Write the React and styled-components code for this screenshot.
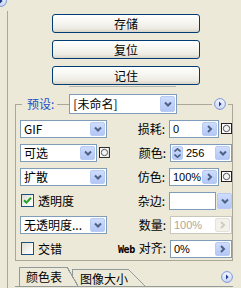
import React from 'react';
import styled, { createGlobalStyle } from 'styled-components';

const Global = createGlobalStyle`
  html, body { margin: 0; padding: 0; background: #ECE9D8; }
  body { font-family: "Noto Sans CJK SC", "Liberation Sans", sans-serif; font-size: 12px; color: #000; }
`;

const LINE = '#ACA899';
const FONT = '"Noto Sans CJK SC", "Liberation Sans", sans-serif';

const Page = styled.div`
  position: relative;
  width: 241px;
  height: 288px;
  overflow: hidden;
  background: #ECE9D8;
  display: flex;
  flex-direction: column;
`;

const CutIcon = styled.div`
  position: absolute;
  top: -7px;
  left: -5px;
  width: 12px;
  height: 12px;
`;

const Panel = styled.div`
  margin: 11px 0 0 7px;
  flex: 1;
  border-left: 1px solid ${LINE};
  display: flex;
  flex-direction: column;
`;

const ButtonStack = styled.div`
  display: flex;
  flex-direction: column;
  gap: 7px;
  margin: 3px 0 0 44px;
`;

const XPButton = styled.button`
  width: 148px;
  height: 19px;
  box-sizing: border-box;
  border: 1px solid #003C74;
  border-radius: 3px;
  background: linear-gradient(#FFFFFF 0%, #F6F5F0 45%, #ECEAE1 80%, #D8D3C7 100%);
  font: 12px ${FONT};
  color: #000;
  padding: 0;
  line-height: 16px;
`;

const Divider = styled.div`
  margin: 1px 0 0 61px;
  width: 107px;
  height: 1px;
  background: #B7B6AC;
`;

const Group = styled.div`
  margin: 7px 0 0 7px;
  width: 218px;
  display: flex;
  flex-direction: column;
`;

const GroupHeader = styled.div`
  display: flex;
  align-items: center;
  height: 20px;
`;

const Corner = styled.div`
  align-self: flex-end;
  width: ${p => p.$w}px;
  height: 9px;
  border-top: 1px solid ${LINE};
  ${p => (p.$side === 'left' ? `border-left: 1px solid ${LINE};` : `border-right: 1px solid ${LINE};`)}
`;

const Segment = styled.div`
  height: 1px;
  margin-top: 1px;
  background: ${LINE};
  ${p => (p.$grow ? 'flex: 1;' : `width: ${p.$w}px;`)}
`;

const Legend = styled.span`
  color: #1C4FC8;
  padding: 0 3px 0 5px;
  line-height: 20px;
  white-space: nowrap;
`;

const GroupBody = styled.div`
  border-left: 1px solid ${LINE};
  border-right: 1px solid ${LINE};
  border-bottom: 1px solid ${LINE};
  padding: 5px 0 2px 4px;
  display: flex;
  flex-direction: column;
  gap: 5px;
`;

const Row = styled.div`
  display: flex;
  align-items: center;
  height: 19px;
`;

const LeftCell = styled.div`
  width: 90px;
  display: flex;
  align-items: center;
  gap: 2px;
  white-space: nowrap;
`;

const FieldLabel = styled.span`
  width: 56px;
  margin-right: 4px;
  text-align: right;
  white-space: nowrap;
  line-height: 18px;
`;

const WebTag = styled.span`
  font-family: "DejaVu Sans Mono", monospace;
  font-weight: bold;
  font-size: 10px;
  margin-right: 4px;
  letter-spacing: -0.5px;
`;

const RightCell = styled.div`
  display: flex;
  align-items: center;
  gap: 2px;
`;

const Field = styled.div`
  box-sizing: border-box;
  width: ${p => p.$w}px;
  height: ${p => p.$h || 18}px;
  display: flex;
  align-items: center;
  border: 1px solid ${p => (p.$disabled ? '#C9C7BA' : '#7F9DB9')};
  background: #fff;
  padding: 0 1px;
  color: ${p => (p.$disabled ? '#ACA899' : '#000')};
`;

const FieldText = styled.span`
  flex: 1;
  min-width: 0;
  padding-left: ${p => p.$pad ?? 2}px;
  line-height: 16px;
  white-space: nowrap;
  font-family: ${p => (p.$latin ? '"Liberation Sans", sans-serif' : FONT)};
  font-size: ${p => (p.$latin ? '11px' : '12px')};
`;

const BlueBtn = styled.span`
  box-sizing: border-box;
  flex: none;
  width: ${p => p.$w || 15}px;
  height: ${p => p.$h || 14}px;
  display: flex;
  flex-direction: column;
  align-items: center;
  justify-content: center;
  gap: 2px;
  border: 1px solid ${p => (p.$disabled ? '#E4E2D8' : '#B8CBF4')};
  border-radius: 2px;
  background: ${p => (p.$disabled ? '#F2F1EA' : 'linear-gradient(#CEDCFD, #B3C7F5)')};
`;

const ColorField = styled.div`
  display: flex;
  align-items: center;
  gap: 1px;
`;

const Chevron = ({ dir = 'down', color = '#4D6185' }) => {
  const paths = {
    down: 'M1 1.5 L4 4.5 L7 1.5',
    up: 'M1 4.5 L4 1.5 L7 4.5',
    right: 'M2 1 L5 4 L2 7',
  };
  const size = dir === 'right' ? { w: 7, h: 8 } : { w: 8, h: 6 };
  return (
    <svg width={size.w} height={size.h} viewBox={`0 0 ${size.w} ${size.h}`}>
      <path d={paths[dir]} fill="none" stroke={color} strokeWidth="2" />
    </svg>
  );
};

const SmallChev = ({ dir }) => (
  <svg width="7" height="4" viewBox="0 0 7 4">
    <path d={dir === 'up' ? 'M0.5 3.5 L3.5 0.8 L6.5 3.5' : 'M0.5 0.5 L3.5 3.2 L6.5 0.5'} fill="none" stroke="#4D6185" strokeWidth="1.6" />
  </svg>
);

const MaskIcon = () => (
  <svg width="11" height="11" viewBox="0 0 11 11">
    <rect x="0.5" y="0.5" width="10" height="10" fill="#fff" stroke="#222" />
    <circle cx="5.5" cy="5.5" r="3.2" fill="#F4F4F4" stroke="#555" />
  </svg>
);

const MenuIcon = () => (
  <svg width="12" height="12" viewBox="0 0 12 12">
    <defs>
      <linearGradient id="mg" x1="0" y1="0" x2="0" y2="1">
        <stop offset="0" stopColor="#F4F7FE" />
        <stop offset="1" stopColor="#C9D6F4" />
      </linearGradient>
    </defs>
    <circle cx="6" cy="6" r="5.4" fill="url(#mg)" stroke="#7C96D8" strokeWidth="1" />
    <path d="M5 3.5 L7.6 6 L5 8.5 Z" fill="#21398A" />
  </svg>
);

const MenuWrap = styled.span`
  display: flex;
  padding: 0 2px;
`;

const CheckBox = styled.span`
  box-sizing: border-box;
  width: 13px;
  height: 13px;
  margin-left: 1px;
  border: 1px solid #1C5180;
  background: linear-gradient(135deg, #DCDCD5 0%, #F4F4F0 60%, #FFFFFF 100%);
  display: flex;
  align-items: center;
  justify-content: center;
`;

const CheckLabel = styled.span`
  margin-left: 2px;
  line-height: 18px;
`;

const Select = ({ w, h, text }) => (
  <Field $w={w} $h={h}>
    <FieldText>{text}</FieldText>
    <BlueBtn $h={h ? h - 4 : 14}>
      <Chevron dir="down" />
    </BlueBtn>
  </Field>
);

const TabBar = styled.div`
  margin: 6px 0 0 7px;
  width: 218px;
  height: 19px;
  display: flex;
  align-items: flex-end;
  border-bottom: 1px solid #919B9C;
`;

const Tab = styled.div`
  position: relative;
  z-index: ${p => (p.$active ? 2 : 1)};
  box-sizing: border-box;
  height: ${p => (p.$active ? 19 : 17)}px;
  margin-left: ${p => p.$ml}px;
  padding: 0 ${p => p.$pr}px 0 ${p => p.$pl}px;
  border-left: 1px solid #919B9C;
  border-top: 1px solid #919B9C;
  background: #ECE9D8;
  line-height: 17px;
  white-space: nowrap;
  &::after {
    content: '';
    position: absolute;
    top: -1px;
    bottom: 0;
    right: -${p => p.$slant}px;
    width: ${p => p.$slant}px;
    background: linear-gradient(
      to top right,
      #ECE9D8 calc(50% - 0.7px),
      #919B9C calc(50% - 0.5px),
      #919B9C calc(50% + 0.5px),
      transparent calc(50% + 0.7px)
    );
  }
`;

const TabMenu = styled.span`
  margin-left: auto;
  align-self: center;
  display: flex;
  padding-top: 1px;
`;

export default function App() {
  return (
    <>
      <Global />
      <Page>
        <CutIcon>
          <MenuIcon />
        </CutIcon>
        <Panel>
          <ButtonStack>
            <XPButton>存储</XPButton>
            <XPButton>复位</XPButton>
            <XPButton>记住</XPButton>
          </ButtonStack>
          <Divider />
          <Group>
            <GroupHeader>
              <Corner $side="left" $w={6} />
              <Legend>预设:</Legend>
              <Segment $w={12} />
              <Select w={108} h={20} text="[未命名]" />
              <Segment $grow />
              <MenuWrap>
                <MenuIcon />
              </MenuWrap>
              <Segment $w={3} />
              <Corner $side="right" $w={1} />
            </GroupHeader>
            <GroupBody>
              <Row>
                <LeftCell>
                  <Select w={87} text="GIF" />
                </LeftCell>
                <FieldLabel>损耗:</FieldLabel>
                <RightCell>
                  <Field $w={50}>
                    <FieldText $latin>0</FieldText>
                    <BlueBtn>
                      <Chevron dir="right" />
                    </BlueBtn>
                  </Field>
                  <MaskIcon />
                </RightCell>
              </Row>
              <Row>
                <LeftCell>
                  <Select w={78} text="可选" />
                  <MaskIcon />
                </LeftCell>
                <FieldLabel>颜色:</FieldLabel>
                <RightCell>
                  <Field $w={62}>
                    <BlueBtn $w={11}>
                      <SmallChev dir="up" />
                      <SmallChev dir="down" />
                    </BlueBtn>
                    <FieldText $latin $pad={3}>256</FieldText>
                    <BlueBtn>
                      <Chevron dir="down" />
                    </BlueBtn>
                  </Field>
                </RightCell>
              </Row>
              <Row>
                <LeftCell>
                  <Select w={87} text="扩散" />
                </LeftCell>
                <FieldLabel>仿色:</FieldLabel>
                <RightCell>
                  <Field $w={50}>
                    <FieldText $latin>100%</FieldText>
                    <BlueBtn>
                      <Chevron dir="right" />
                    </BlueBtn>
                  </Field>
                  <MaskIcon />
                </RightCell>
              </Row>
              <Row>
                <LeftCell>
                  <CheckBox>
                    <svg width="9" height="9" viewBox="0 0 9 9">
                      <path d="M1 4.2 L3.4 6.6 L8 1.8" fill="none" stroke="#21A121" strokeWidth="2" />
                    </svg>
                  </CheckBox>
                  <CheckLabel>透明度</CheckLabel>
                </LeftCell>
                <FieldLabel>杂边:</FieldLabel>
                <RightCell>
                  <ColorField>
                    <Field $w={47} />
                    <BlueBtn $h={16}>
                      <Chevron dir="down" />
                    </BlueBtn>
                  </ColorField>
                </RightCell>
              </Row>
              <Row>
                <LeftCell>
                  <Select w={87} text="无透明度..." />
                </LeftCell>
                <FieldLabel>数量:</FieldLabel>
                <RightCell>
                  <Field $w={62} $disabled>
                    <FieldText $latin>100%</FieldText>
                    <BlueBtn $disabled>
                      <Chevron dir="right" color="#CFCDC2" />
                    </BlueBtn>
                  </Field>
                </RightCell>
              </Row>
              <Row>
                <LeftCell>
                  <CheckBox />
                  <CheckLabel>交错</CheckLabel>
                </LeftCell>
                <FieldLabel>
                  <WebTag>Web</WebTag>对齐:
                </FieldLabel>
                <RightCell>
                  <Field $w={62}>
                    <FieldText $latin>0%</FieldText>
                    <BlueBtn>
                      <Chevron dir="right" />
                    </BlueBtn>
                  </Field>
                </RightCell>
              </Row>
            </GroupBody>
          </Group>
          <TabBar>
            <Tab $active $ml={4} $pl={6} $pr={5} $slant={11}>颜色表</Tab>
            <Tab $ml={5} $pl={7} $pr={0} $slant={17}>图像大小</Tab>
            <TabMenu>
              <MenuIcon />
            </TabMenu>
          </TabBar>
        </Panel>
      </Page>
    </>
  );
}
